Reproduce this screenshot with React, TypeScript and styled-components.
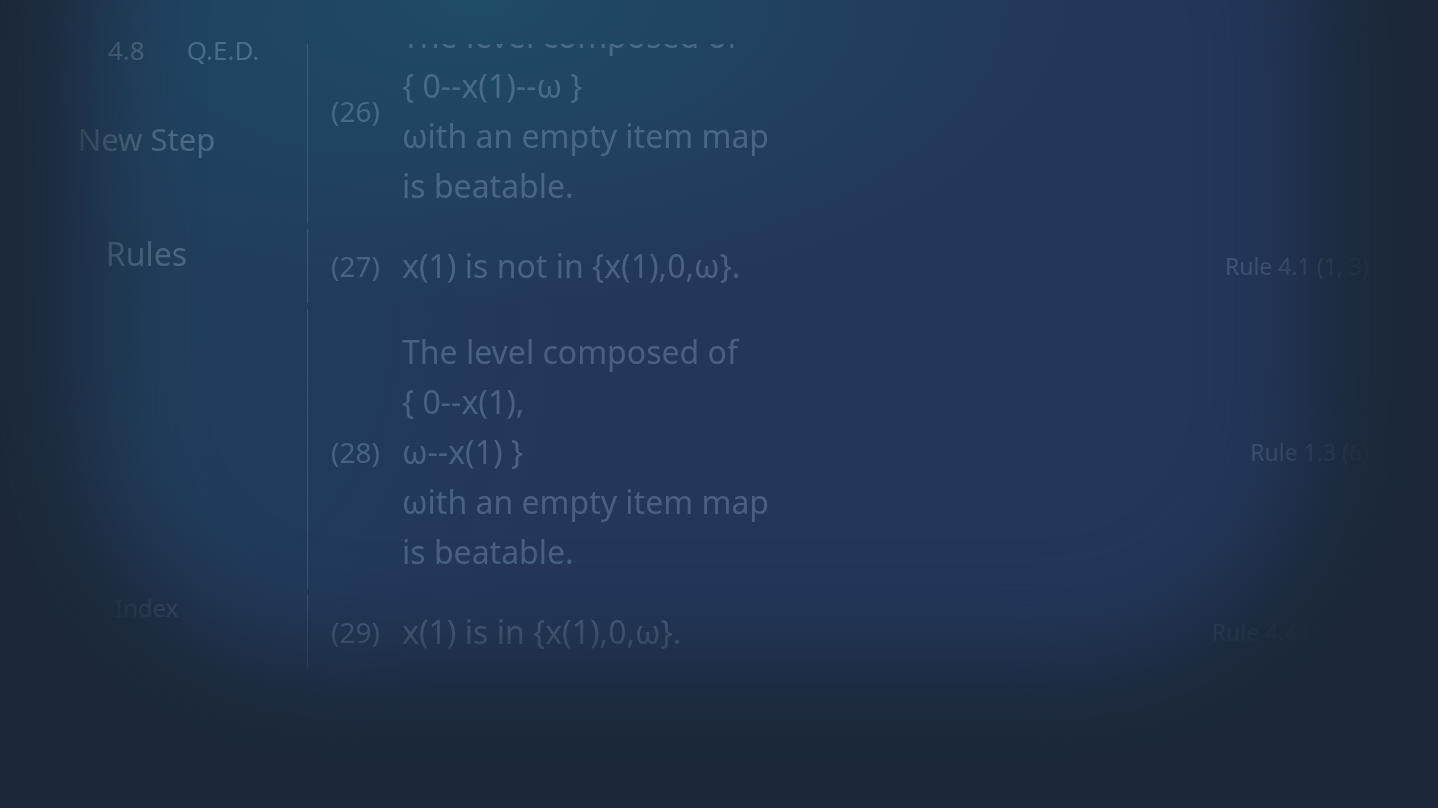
import styled, { createGlobalStyle } from "styled-components";

// Global
const GlobalStyle = createGlobalStyle`
  html, body {
    margin: 0;
    padding: 0;
    background: #1d2939;
  }
  body {
    font-family: "Noto Sans", "Open Sans", sans-serif;
    overflow: hidden;
  }
`;

// Styled
const Page = styled.div`
  position: relative;
  width: 100vw;
  height: 100vh;
  overflow: hidden;
  display: flex;
  background:
    radial-gradient(ellipse 42% 38% at 33% 0%, rgba(30, 78, 102, 0.9), rgba(30, 78, 102, 0) 100%),
    radial-gradient(ellipse 28% 60% at 12% 40%, rgba(30, 66, 92, 0.7), rgba(30, 66, 92, 0) 100%),
    #23375a;
`;

const Blurred = styled.div`
  display: flex;
  flex: 1;
  filter: blur(0.75px);
`;

const Sidebar = styled.nav`
  width: 307px;
  flex: none;
  display: flex;
  flex-direction: column;
  align-items: center;
  padding-top: 31px;
  box-sizing: border-box;
  color: rgba(140, 170, 195, 0.4);
`;

const Crumbs = styled.div`
  align-self: flex-start;
  margin-left: 108px;
  display: flex;
  gap: 42px;
  font-size: 26px;
  line-height: 38px;
`;

const NavItem = styled.div<{ $size: number; $top: number }>`
  font-size: ${(p) => p.$size}px;
  line-height: 40px;
  margin-top: ${(p) => p.$top}px;
  margin-right: 14px;
`;

const Main = styled.main`
  flex: 1;
  margin-top: 44px;
  height: 627px;
  overflow: hidden;
  padding-right: 69px;
`;

const Steps = styled.div`
  margin-top: -45px;
  display: flex;
  flex-direction: column;
  gap: 6px;
`;

const Row = styled.div<{ $extra?: number }>`
  display: grid;
  grid-template-columns: 94px 1fr auto;
  align-items: center;
  border-left: 1px solid rgba(130, 160, 190, 0.26);
  padding: ${(p) => 12 + (p.$extra || 0)}px 0 12px;
`;

const StepNo = styled.span`
  padding-left: 23px;
  font-size: 28px;
  color: rgba(140, 170, 195, 0.36);
`;

const Statement = styled.div`
  font-size: 32px;
  line-height: 50px;
  color: rgba(150, 175, 200, 0.35);
  white-space: pre;
`;

const RuleRef = styled.span`
  font-size: 23px;
  color: rgba(140, 165, 190, 0.3);
`;

const Vignette = styled.div`
  position: absolute;
  inset: 0;
  pointer-events: none;
  overflow: hidden;
`;

const VignetteHole = styled.div`
  position: absolute;
  top: -220px;
  left: 88px;
  right: 128px;
  bottom: 148px;
  border-radius: 240px;
  box-shadow: 0 0 0 1200px #1c2839;
  filter: blur(50px);
`;

// Data
interface Step {
  no: number;
  lines: string[];
  rule: string;
  extra?: number;
}

const steps: Step[] = [
  {
    no: 26,
    lines: ["The level composed of", "{ 0--x(1)--ω }", "ωith an empty item map", "is beatable."],
    rule: "",
  },
  { no: 27, lines: ["x(1) is not in {x(1),0,ω}."], rule: "Rule 4.1 (1, 3)" },
  {
    no: 28,
    lines: ["The level composed of", "{ 0--x(1),", "ω--x(1) }", "ωith an empty item map", "is beatable."],
    rule: "Rule 1.3 (6)",
    extra: 6,
  },
  { no: 29, lines: ["x(1) is in {x(1),0,ω}."], rule: "Rule 4.4 (1, 27)" },
];

const App = () => {
  return (
    <>
      <GlobalStyle />
      <Page>
        <Blurred>
          <Sidebar>
            <Crumbs>
              <span>4.8</span>
              <span>Q.E.D.</span>
            </Crumbs>
            <NavItem $size={31} $top={50}>New Step</NavItem>
            <NavItem $size={32} $top={75}>Rules</NavItem>
            <NavItem $size={24} $top={314}>Index</NavItem>
          </Sidebar>
          <Main>
            <Steps>
              {steps.map((s) => (
                <Row key={s.no} $extra={s.extra}>
                  <StepNo>({s.no})</StepNo>
                  <Statement>{s.lines.join("\n")}</Statement>
                  <RuleRef>{s.rule}</RuleRef>
                </Row>
              ))}
            </Steps>
          </Main>
        </Blurred>
        <Vignette>
          <VignetteHole />
        </Vignette>
      </Page>
    </>
  );
};

export default App;
